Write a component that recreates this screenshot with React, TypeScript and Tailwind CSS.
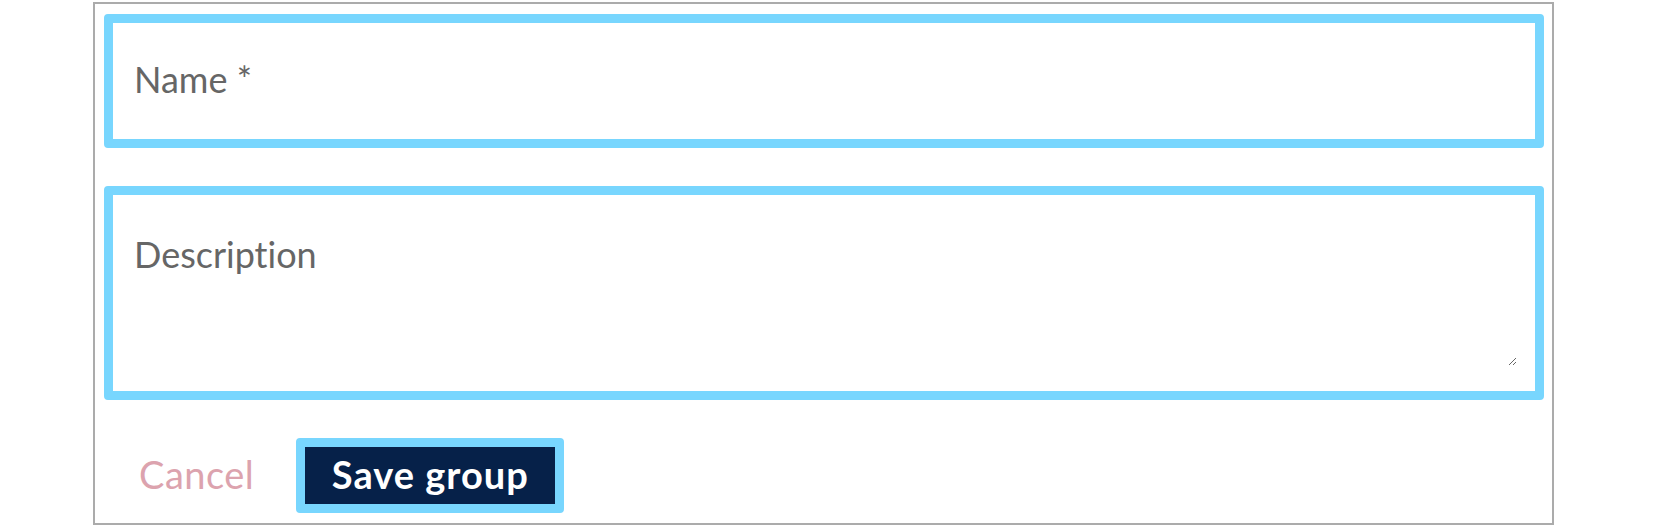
export default function App() {
  return (
    <div className="w-[1658px] h-[527px] bg-white overflow-hidden [font-variant-ligatures:none]" style={{ fontFamily: 'Lato, "Open Sans", sans-serif' }}>
      <div className="ml-[93px] mt-[2px] w-[1461px] h-[523px] border-2 border-[#ababab] pl-[9px] pr-[8px] pt-[10px] pb-[10px] flex flex-col gap-[38px]">
        {/* Name */}
        <div className="h-[134px] border-[9px] border-[#78d6fe] rounded-[4px] pl-[21px] pr-[18px] pt-[36px]">
          <input
            type="text"
            placeholder="Name *"
            className="w-full h-[40px] leading-[40px] text-[36px] text-[#333] placeholder:text-[#666] outline-none bg-transparent"
          />
        </div>

        {/* Description */}
        <div className="h-[214px] border-[9px] border-[#78d6fe] rounded-[4px] pl-[21px] pr-[18px] pt-[39px] pb-[25px] flex">
          <textarea
            placeholder="Description"
            className="flex-1 text-[36px] leading-[40px] text-[#333] placeholder:text-[#666] outline-none bg-transparent resize-y [font-variant-ligatures:none]"
          />
        </div>

        {/* Actions */}
        <div className="flex items-center h-[75px]">
          <button className="ml-[35px] mb-[3px] text-[38px] leading-none text-[#dca3ae] tracking-[0.5px]">Cancel</button>
          <div className="ml-[42px] h-[75px] border-[9px] border-[#78d6fe] rounded-[4px]">
            <button className="h-full w-[250px] pb-[3px] bg-[#062149] text-white text-[38px] font-bold leading-none tracking-[1px] text-center">
              Save group
            </button>
          </div>
        </div>
      </div>
    </div>
  );
}
